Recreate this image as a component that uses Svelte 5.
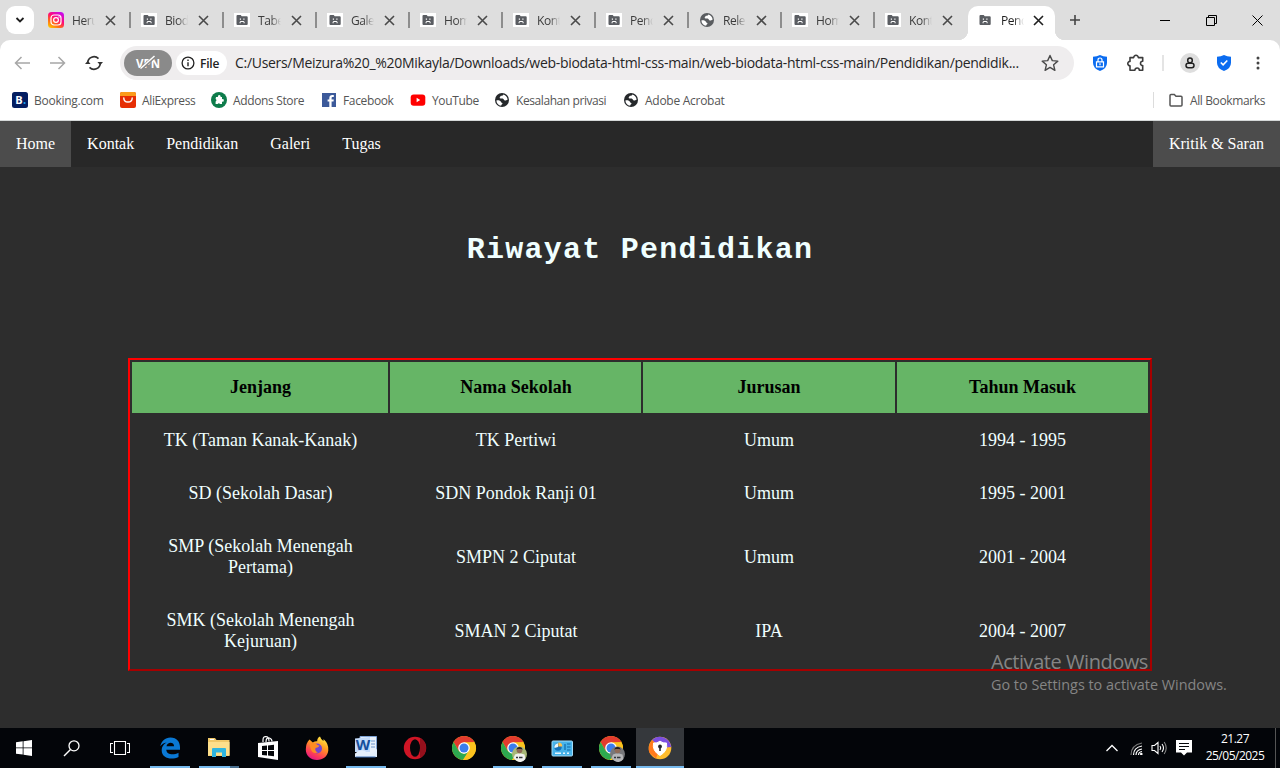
<script>
  const tabs = ['Heru', 'Biod', 'Tabe', 'Gale', 'Hom', 'Kont', 'Pend', 'Rele', 'Hom', 'Kont', 'Pend'];
  const kinds = { 0: 'insta', 7: 'globe' };
  const bookmarks = [
    { icon: 'booking', label: 'Booking.com', w: 86 },
    { icon: 'ali', label: 'AliExpress', w: 69 },
    { icon: 'addons', label: 'Addons Store', w: 88 },
    { icon: 'fb', label: 'Facebook', w: 67 },
    { icon: 'yt', label: 'YouTube', w: 62 },
    { icon: 'globe', label: 'Kesalahan privasi', w: 107 },
    { icon: 'globe', label: 'Adobe Acrobat', w: 90 }
  ];
  const links = ['Home', 'Kontak', 'Pendidikan', 'Galeri', 'Tugas'];
  const rows = [
    ['TK (Taman Kanak-Kanak)', 'TK Pertiwi', 'Umum', '1994 - 1995'],
    ['SD (Sekolah Dasar)', 'SDN Pondok Ranji 01', 'Umum', '1995 - 2001'],
    ['SMP (Sekolah Menengah Pertama)', 'SMPN 2 Ciputat', 'Umum', '2001 - 2004'],
    ['SMK (Sekolah Menengah Kejuruan)', 'SMAN 2 Ciputat', 'IPA', '2004 - 2007']
  ];
  const apps = [
    { icon: 'edge', open: true }, { icon: 'files', open: true, stacked: true }, { icon: 'store' }, { icon: 'firefox' },
    { icon: 'word', open: true }, { icon: 'opera' }, { icon: 'chrome' }, { icon: 'chromeA', open: true },
    { icon: 'panel', open: true }, { icon: 'chromeB', open: true }, { icon: 'avast', open: true, active: true }
  ];
</script>

{#snippet globe(color)}
  <svg width="16" height="16" viewBox="0 0 16 16">
    <circle cx="8" cy="8" r="7" fill={color} />
    <path d="M2.400 8.400c2.200-.3 4.300.3 4.600 1.600.2 1 1.400.6 1.500 1.600.1.8-1.600 1-1.300 2.200C4.300 13.500 2.500 11 2.400 8.400zM9.300 2.400c-.2 1.200-1 1.100-2.200 1.300-1.100.2-.5 1.500-1.600 1.900.2 1.200 2 .8 3.200 1 1.200.3 1 1.900 2.300 2 1 .1 1.500-.8 2.600-.8C13.600 5 11.800 3 9.300 2.400z" fill="#fff" />
  </svg>
{/snippet}

{#snippet cross(color, s)}
  <svg width="11" height="11" viewBox="0 0 11 11"><path d="M1 1l9 9M10 1l-9 9" stroke={color} stroke-width={s} fill="none" /></svg>
{/snippet}

{#snippet chrome()}
  <circle cx="12" cy="12" r="12" fill="#fbc116" />
  <path d="M1.600 6A12 12 0 0 1 22.400 6L12 6.600 6.800 15z" fill="#e33b2e" />
  <path d="M1.600 6A12 12 0 0 0 11 24L17.200 15 12 18 6.800 15z" fill="#2da94f" />
  <path d="M12 6.500H22.600A12 12 0 0 1 11 24L17.200 14z" fill="#fcc31e" />
  <circle cx="12" cy="12" r="5.800" fill="#fff" />
  <circle cx="12" cy="12" r="4.500" fill="#3b7ded" />
{/snippet}

{#snippet mark(kind)}
  {#if kind === 'insta'}
    <svg width="16" height="16" viewBox="0 0 16 16">
      <defs><linearGradient id="ig" x1="0.15" y1="1" x2="0.8" y2="0"><stop offset="0" stop-color="#ffc300" /><stop offset=".3" stop-color="#ff6a18" /><stop offset=".6" stop-color="#ff0b78" /><stop offset="1" stop-color="#c50cf2" /></linearGradient></defs>
      <rect width="16" height="16" rx="3.500" fill="url(#ig)" />
      <rect x="3" y="3" width="10" height="10" rx="3" fill="none" stroke="#fff" stroke-width="1.200" />
      <circle cx="8" cy="8" r="2.400" fill="none" stroke="#fff" stroke-width="1.200" /><circle cx="11" cy="5" r=".7" fill="#fff" />
    </svg>
  {:else if kind === 'globe'}
    {@render globe('#5a5d60')}
  {:else}
    <svg width="16" height="16" viewBox="0 0 16 16">
      <rect y="1" width="16" height="14" fill="#fff" />
      <path d="M2.500 4q0-1 1-1h3.200l1 1.300h5q1 0 1 1V12q0 1-1 1h-9.200q-1 0-1-1z" fill="#5a5d62" />
      <path d="M5.800 6.500h1.200v1.200h-1.200zM9.300 6.500h1.200v1.200H9.300zM5.600 11.200V10l1-1h3l1 1v1.200h-1v-.9l-.4-.3H7l-.4.3v.9z" fill="#fff" />
    </svg>
  {/if}
{/snippet}

{#snippet bicon(kind)}
  {#if kind === 'globe'}
    {@render globe('#25282b')}
  {:else}
    <svg width="16" height="16" viewBox="0 0 16 16">
      {#if kind === 'booking'}
        <rect width="16" height="16" rx="2.500" fill="#041e62" />
        <text x="3.300" y="12" class="bk">B</text><circle cx="12.500" cy="11" r="1.100" fill="#18a4f5" />
      {:else if kind === 'ali'}
        <rect width="16" height="16" rx="2" fill="#e62e04" /><path d="M0 4V2q0-2 2-2h12q2 0 2 2v2z" fill="#fb9c1b" />
        <path d="M3.800 6c0 5.400 8.400 5.400 8.400 0" fill="none" stroke="#fff" stroke-width="1.400" stroke-linecap="round" />
      {:else if kind === 'addons'}
        <circle cx="8" cy="8" r="8" fill="#0e7c4b" />
        <path d="M5 5h2a1.400 1.400 0 1 1 2.500 0H11v2.200a1.300 1.300 0 1 1 0 2.400V12H9a1.300 1.300 0 0 0-2.300 0H4.600V9.500a1.300 1.300 0 0 0 0-2.400z" fill="#fff" />
      {:else if kind === 'fb'}
        <rect x="1" y="1" width="14" height="14" fill="#3c5a9a" />
        <path d="M8.300 15V9.600H6.600V7.400h1.700V6c0-2.100 1.200-3 3-3h1.500v2h-1c-1 0-1.200.4-1.200 1.100v1.300h2.200l-.3 2.200h-1.900V15z" fill="#fff" />
      {:else}
        <rect x=".7" y="2.500" width="14.600" height="11.200" rx="3" fill="#f00" /><path d="M6.600 5.800v4.400L10.200 8z" fill="#fff" />
      {/if}
    </svg>
  {/if}
{/snippet}

{#snippet app(kind)}
  <svg width="28" height="28" viewBox="-2 -2 28 28">
    {#if kind === 'edge'}
      <path d="M2.300 10.300C3.300 5 7.100 1.500 12.400 1.500 19 1.500 22 6 22 11v2.700H8.300c.3 5.500 7.700 5.500 12.200 3v4.300C14 24.300 3.700 22.700 3.700 14.600c0-4.300 2.400-6.700 5.100-8C5.600 7 3.700 8.600 2.300 10.300zM8.500 10.200h7.600c0-4.700-7-4.600-7.600 0z" fill="#0a78d4" />
    {:else if kind === 'files'}
      <path d="M1 2h7l1.500 2h13v16H1z" fill="#f0c869" /><path d="M1 6h21.500v13.500H1z" fill="#fddf8b" />
      <path d="M5 21v-8q0-1 1-1h12q1 0 1 1v8h-4v-4.500H9V21z" fill="#2fb5df" /><path d="M3 3.500h4" stroke="#fff" />
    {:else if kind === 'store'}
      <path d="M7 6V4q0-4 3.500-3.300Q13 1 13 5.500M10 6q0-5 3.500-4Q16 3 16 5.500" fill="none" stroke="#fff" stroke-width="1.200" />
      <path d="M2 7l20-2v19L2 21z" fill="#fff" /><path d="M6 10l5-.5v4.500H6zM12 9.400l6-.6V14h-6zM6 15h5v4.500L6 19zM12 15h6v5.300l-6-.7z" fill="#05070a" />
    {:else if kind === 'firefox'}
      <defs><linearGradient id="ff" x1=".8" y1="0" x2=".3" y2="1"><stop offset="0" stop-color="#fff24a" /><stop offset=".4" stop-color="#ff9b21" /><stop offset=".75" stop-color="#ff4054" /><stop offset="1" stop-color="#e31587" /></linearGradient></defs>
      <path d="M4.500 3.500l3.300 3Q10 5 12.200 5.300 12 2 15 .5q1 3 3.300 4.500 .5-1 .2-2Q24 8 23.300 14.500C22.500 20.500 18 24 12 24 5.500 24 .8 19.500.8 13.500Q.8 7 4.500 3.500z" fill="url(#ff)" />
      <circle cx="12" cy="12.500" r="5" fill="#7546cf" /><path d="M4.500 7.500q5-2 8 1.500l2 .8q-1 2-4 2.200-1 3 2.500 4.500-6 2-7.500-4.500z" fill="#ff8c22" />
    {:else if kind === 'word'}
      <path d="M6 .5h16.500v20H6z" fill="#e9f1fb" stroke="#7fa4d6" /><path d="M17 5h4M17 8h4M17 11h4" stroke="#6f96cc" />
      <path d="M1 2.500l15-1.500v15L1 16z" fill="#c2dafa" /><text x="1.800" y="14" class="wd">W</text>
      <path d="M1 17.500q7-6 12-1 5 4 10-4v8.500H1z" fill="#e4effc" /><path d="M1.500 21h20" stroke="#3f70b7" />
    {:else if kind === 'opera'}
      <ellipse cx="12" cy="12" rx="11.200" ry="11.200" fill="#cf1525" /><path d="M17 2q6 3 6 10t-6 10z" fill="#94101c" /><ellipse cx="12" cy="12" rx="5" ry="8.800" fill="#05070a" />
    {:else if kind === 'chrome'}
      {@render chrome()}
    {:else if kind === 'chromeA' || kind === 'chromeB'}
      {@render chrome()}
      <circle cx="18.500" cy="18" r="7.500" fill={kind === 'chromeA' ? '#a8b878' : '#77787b'} />
      <path d="M12.500 22l1.500-3.500 3-1h3l3.500 1 1 4.500q-5 6.500-12-1z" fill={kind === 'chromeA' ? '#f1f1ef' : '#b5b6b8'} />
      <path d="M15 21.500h2M18 21.500h3.500" stroke="#33363b" stroke-width="1.300" />
      <circle cx="18.500" cy="14.500" r="2.800" fill="#8f6a57" /><path d="M15.500 14q0-3 3-3t3 3l-1-1h-4z" fill="#26201f" />
    {:else if kind === 'panel'}
      <rect x="2" y="5" width="20.500" height="15" rx="1" fill="#46b2ea" stroke="#a3dcf8" />
      <circle cx="8" cy="11" r="3.700" fill="#1471b8" /><path d="M8 11V7.300a3.700 3.700 0 0 0-3.500 4.700z" fill="#e8f7ff" /><path d="M8.300 10.500V6.500a4 4 0 0 1 4 4z" fill="#ffc04a" />
      <path d="M17 8h3.500M17 11h3.500M17 14h3.500M15 8v6" stroke="#0f68a8" stroke-width="1.200" fill="none" /><path d="M5 17.200h6M13 17.200h2M17 17.200h2" stroke="#e8f7ff" stroke-width="1.500" />
    {:else}
      <circle cx="12" cy="12" r="11.300" fill="#ffbd2e" /><path d="M12 12L4 4Q9-1 16 1.500 22 4 23.300 11z" fill="#7c4fe0" />
      <path d="M12 12L4 4Q-1 10 1.500 17L8 22.500z" fill="#ff7b1c" />
      <path d="M5.500 7q3.500.5 6.500-1.800Q15 7.500 18.500 7q1.500 8-6.500 12.500Q4 15 5.500 7z" fill="#fff" stroke="#fff" stroke-linejoin="round" /><circle cx="12" cy="10.500" r="1.900" fill="#25272f" /><path d="M12 11v4" stroke="#25272f" stroke-width="1.600" />
    {/if}
  </svg>
{/snippet}

<div class="screen">
  <div class="tabbar">
    <div class="menu"><svg width="10" height="6" viewBox="0 0 10 6"><path d="M1.500 1L5 4.500 8.500 1" fill="none" stroke="#1f1f1f" stroke-width="1.800" /></svg></div>
    {#each tabs as t, i}
      <div class="tab" class:active={i === 10} class:sep={i < 9}>
        {@render mark(kinds[i])}
        <span class="tt">{t}</span>
        {@render cross(i === 10 ? '#1f1f1f' : '#4a4a4a', 1.6)}
      </div>
    {/each}
    <svg class="plus" width="12" height="12" viewBox="0 0 12 12"><path d="M6 1v10M1 6h10" stroke="#444" stroke-width="1.600" /></svg>
    <div class="winbtns">
      <svg width="11" height="11" viewBox="0 0 11 11"><path d="M0 5.500h10" stroke="#000" /></svg>
      <svg width="11" height="11" viewBox="0 0 11 11"><path d="M.5 2.500h8v8h-8zM2.500 2.500v-2h8v8h-2" fill="none" stroke="#000" /></svg>
      <svg width="11" height="11" viewBox="0 0 11 11"><path d="M.5.5l10 10M10.500.5l-10 10" stroke="#000" /></svg>
    </div>
  </div>

  <div class="toolbar">
    <svg class="back" width="16" height="14" viewBox="0 0 16 14"><path d="M16 7H1.500M7.500 1l-6 6 6 6" fill="none" stroke="#a7a7a7" stroke-width="1.500" /></svg>
    <svg class="fwd" width="16" height="14" viewBox="0 0 16 14"><path d="M0 7h14.500M8.500 1l6 6-6 6" fill="none" stroke="#a7a7a7" stroke-width="1.500" /></svg>
    <svg class="reload" width="18" height="16" viewBox="0 0 18 16"><path d="M2.700 8A6.300 6.300 0 0 1 13.500 3.600M15.300 8A6.300 6.300 0 0 1 4.500 12.400" fill="none" stroke="#333" stroke-width="1.600" /><path d="M0 9h5.600L2.800 5.800zM12.400 7H18l-2.800 3.200z" fill="#333" /></svg>
    <div class="omni">
      <div class="vpn"><span>VPN</span><svg width="24" height="16" viewBox="0 0 24 16"><path d="M4.500 14.500L18.500 1.500" stroke="#8a8a8a" stroke-width="3.500" /><path d="M4.500 13.500L18.500 1" stroke="#fff" stroke-width="1.500" /></svg></div>
      <div class="file"><svg width="14" height="14" viewBox="0 0 14 14"><circle cx="7" cy="7" r="5.900" fill="none" stroke="#222" stroke-width="1.300" /><path d="M7 6.200v4M7 3.600v1.500" stroke="#222" stroke-width="1.400" /></svg><span>File</span></div>
      <span class="url">C:/Users/Meizura%20_%20Mikayla/Downloads/web-biodata-html-css-main/web-biodata-html-css-main/Pendidikan/pendidik...</span>
      <svg class="star" width="18" height="18" viewBox="0 0 18 18"><path d="M9 1.500l2.300 5.100 5.500.5-4.200 3.700 1.300 5.500L9 13.400l-4.900 2.900 1.300-5.500L1.200 7.100l5.500-.5z" fill="none" stroke="#4a4a4a" stroke-width="1.400" stroke-linejoin="round" /></svg>
    </div>
    <div class="ext">
      <svg width="14" height="16" viewBox="0 0 14 16"><path d="M7 0q3 1.800 7 1.800v6Q14 13.500 7 16 0 13.500 0 7.800v-6Q4 1.800 7 0z" fill="#0b6cf0" /><path d="M3.500 6.800h7v5h-7zM5 6.500V5q0-2 2-2t2 2v1.500" fill="none" stroke="#fff" stroke-width="1.200" /><path d="M7 8.300v2" stroke="#fff" stroke-width="1.200" /></svg>
      <svg class="puzzle" width="19" height="19" viewBox="0 0 19 19"><path d="M4 4.600h3.700a2.300 2.300 0 1 1 4.600 0h4.400v3.600a2.200 2.200 0 0 0 0 4.400v4.600h-3.400a2.200 2.200 0 0 0-4.400 0H4v-4.400a2.200 2.200 0 1 1 0-4.400z" fill="none" stroke="#3c3c3c" stroke-width="1.600" stroke-linejoin="round" /></svg>
      <i></i>
      <svg class="prof" width="20" height="20" viewBox="0 0 20 20"><circle cx="10" cy="10" r="10" fill="#dedede" /><circle cx="10" cy="7.400" r="2.300" fill="none" stroke="#222" stroke-width="1.500" /><rect x="6" y="10.200" width="8" height="4.500" rx="2.200" fill="none" stroke="#222" stroke-width="1.500" /></svg>
      <svg class="check" width="14" height="16" viewBox="0 0 14 16"><path d="M7 0q3 1.800 7 1.800v6Q14 13.500 7 16 0 13.500 0 7.800v-6Q4 1.800 7 0z" fill="#0b6cf0" /><path d="M3.800 7.500l2.300 2.300 4.200-4.300" fill="none" stroke="#fff" stroke-width="1.600" /></svg>
      <svg class="dots" width="4" height="14" viewBox="0 0 4 14"><circle cx="2" cy="2" r="1.500" fill="#444" /><circle cx="2" cy="7" r="1.500" fill="#444" /><circle cx="2" cy="12" r="1.500" fill="#444" /></svg>
    </div>
  </div>

  <div class="bookmarks">
    {#each bookmarks as b}
      <div class="bm" style:width="{b.w + 22}px">{@render bicon(b.icon)}<span>{b.label}</span></div>
    {/each}
    <div class="all"><svg width="14" height="14" viewBox="0 0 14 14"><path d="M1 2.500q0-1 1-1h3.300L7 3.300h5q1 0 1 1V12q0 1-1 1H2q-1 0-1-1z" fill="none" stroke="#555" stroke-width="1.500" /></svg><span>All Bookmarks</span></div>
  </div>

  <nav>
    {#each links as l, i}<a href="#{l}" class:on={i === 0}>{l}</a>{/each}
    <a href="#saran" class="on right">Kritik &amp; Saran</a>
  </nav>

  <main>
    <h1>Riwayat Pendidikan</h1>
    <table>
      <colgroup><col class="c1" /><col class="c2" /><col class="c3" /><col class="c4" /></colgroup>
      <thead><tr><th>Jenjang</th><th>Nama Sekolah</th><th>Jurusan</th><th>Tahun Masuk</th></tr></thead>
      <tbody>
        {#each rows as r}<tr>{#each r as c}<td>{c}</td>{/each}</tr>{/each}
      </tbody>
    </table>
    <div class="notice"><div class="n1">Activate Windows</div><div class="n2">Go to Settings to activate Windows.</div></div>
  </main>

  <footer>
    <div class="sys"><svg width="16" height="16" viewBox="0 0 16 16"><path d="M0 2.300L6.700 1.300V7.500H0zM7.500 1.200L16 0v7.500H7.500zM0 8.300h6.700v6.300L0 13.700zM7.500 8.300H16V16l-8.500-1.200z" fill="#fff" /></svg></div>
    <div class="sys"><svg width="18" height="18" viewBox="0 0 18 18"><circle cx="11" cy="6.800" r="5" fill="none" stroke="#fff" stroke-width="1.300" /><path d="M7.500 10.500L1 17" stroke="#fff" stroke-width="1.400" /></svg></div>
    <div class="sys last"><svg width="20" height="16" viewBox="0 0 20 16"><path d="M4.500 1.500h11v13h-11zM3 3.500H.5v9H3M17 3.500h2.500v9H17" fill="none" stroke="#fff" stroke-width="1.100" /></svg></div>
    {#each apps as a}
      <div class="app" class:open={a.open} class:stacked={a.stacked} class:current={a.active}>{@render app(a.icon)}</div>
    {/each}
    <div class="tray">
      <svg width="12" height="8" viewBox="0 0 12 8"><path d="M.5 7L6 1.500 11.500 7" fill="none" stroke="#fff" stroke-width="1.300" /></svg>
      <svg class="wifi" width="13" height="13" viewBox="0 0 13 13"><path d="M1 13Q1 3 12 1" fill="none" stroke="#777" stroke-width="1.200" /><path d="M3.500 13Q3.500 5.500 12 4M6 13Q6 8 12 7M8.500 13q0-3 3.500-3.500" fill="none" stroke="#fff" stroke-width="1.200" /><circle cx="11.300" cy="12" r="1.300" fill="#fff" /></svg>
      <svg class="vol" width="17" height="14" viewBox="0 0 17 14"><path d="M1 4.500h2.500L7 1.500v11L3.500 9.500H1z" fill="none" stroke="#fff" stroke-width="1.100" /><path d="M9 5q1.500 2 0 4M11 3q3 4 0 8" fill="none" stroke="#fff" stroke-width="1.100" /><path d="M13.200 1q4 6 0 12" fill="none" stroke="#888" stroke-width="1.100" /></svg>
      <svg class="note" width="16" height="16" viewBox="0 0 16 16"><path d="M0 0h16v12.500h-5L8 15.500l-3-3H0z" fill="#fff" /><path d="M3 3.500h10M3 6.500h10M3 9.500h6" stroke="#05070a" /></svg>
      <div class="clock"><div class="time">21.27</div><div class="date">25/05/2025</div></div>
    </div>
  </footer>
</div>

<style>
  :global(body) { margin: 0; overflow: hidden; }
  .screen { width: 1280px; height: 768px; display: flex; flex-direction: column; background: #dedede; font-family: "Open Sans", "Noto Sans", sans-serif; overflow: hidden; }
  .screen * { box-sizing: border-box; }
  svg { display: block; flex: none; }
  span { white-space: nowrap; }
  .tabbar { height: 40px; display: flex; align-items: center; flex: none; }
  .menu { width: 28px; height: 28px; border-radius: 9px; background: #fff; margin: 0 4px 0 6px; display: flex; align-items: center; justify-content: center; }
  .tab { width: 93px; height: 40px; flex: none; display: flex; align-items: center; padding-left: 10px; position: relative; }
  .tab.sep::after { content: ""; position: absolute; right: 0; top: 12px; width: 2px; height: 16px; background: #8d8d8d; }
  .tt { width: 23px; overflow: hidden; margin: 2px 10px 0 8px; font-size: 12px; line-height: 18px; letter-spacing: -0.45px; color: #3c3c3c; -webkit-mask-image: linear-gradient(90deg, #000 55%, transparent); mask-image: linear-gradient(90deg, #000 55%, transparent); }
  .active { width: 87px; height: 34px; align-self: flex-end; background: #fff; border-radius: 10px 10px 0 0; padding-left: 9px; }
  .active > :global(*) { transform: translateY(-3px); }
  .active .tt { color: #1f1f1f; margin-right: 9px; }
  .active::before, .active::after { content: ""; position: absolute; bottom: 0; width: 10px; height: 10px; }
  .active::before { left: -10px; background: radial-gradient(circle at 0 0, transparent 10px, #fff 10.5px); }
  .active::after { right: -10px; background: radial-gradient(circle at 100% 0, transparent 10px, #fff 10.5px); }
  .plus { margin-left: 14px; }
  .winbtns { margin-left: auto; display: flex; gap: 35px; padding-right: 17px; }
  .toolbar { height: 46px; flex: none; display: flex; align-items: center; background: #fff; border-radius: 10px 10px 0 0; }
  .back { margin-left: 14px; }
  .fwd { margin-left: 20px; }
  .reload { margin-left: 19px; }
  .omni { margin-left: 17px; width: 954px; height: 34px; border-radius: 17px; background: #efedee; display: flex; align-items: center; padding-left: 4px; }
  .vpn { width: 48px; height: 26px; border-radius: 13px; background: #8a8a8a; color: #fff; font-size: 11.500px; font-weight: 700; display: grid; place-items: center; }
  .vpn > :global(*) { grid-area: 1 / 1; }
  .file { width: 51px; height: 24px; border-radius: 12px; background: #fff; margin-left: 4px; display: flex; align-items: center; gap: 5px; padding-left: 5px; font-size: 12px; font-weight: 600; letter-spacing: -0.2px; color: #222; }
  .url { width: 786px; margin-left: 8px; margin-top: -1px; font-size: 14px; letter-spacing: -0.3px; color: #262626; }
  .star { margin-left: 20px; }
  .ext { display: flex; align-items: center; margin-left: 19px; }
  .puzzle { margin-left: 19px; margin-right: 1px; margin-top: -1px; }
  .ext i { width: 2px; height: 16px; background: #e4e4e4; margin: 0 16px 0 16px; }
  .check { margin-left: 17px; }
  .dots { margin-left: 25px; }
  .bookmarks { height: 35px; flex: none; background: #fff; border-bottom: 1px solid #d5d8d8; display: flex; align-items: center; padding: 0 14px 6px 12px; font-size: 12px; letter-spacing: -0.36px; color: #555; }
  .bm { display: flex; align-items: center; gap: 6px; flex: none; }
  .bm:first-child, .bm:nth-child(7) { letter-spacing: -0.27px; }
  .bm:nth-child(6) { letter-spacing: -0.42px; }
  .all { margin-left: auto; width: 113px; display: flex; align-items: center; gap: 7px; border-left: 1px solid #dcdcdc; padding-left: 15px; height: 16px; letter-spacing: -0.38px; }
  nav { height: 46px; flex: none; display: flex; background: #282828; font: 16px "Liberation Serif", serif; }
  nav a { color: #fff; text-decoration: none; padding: 14px 16px; line-height: 18px; }
  .on { background: #4c4c4c; }
  .right { margin-left: auto; }
  main { flex: 1; background: #2d2d2d; position: relative; overflow: hidden; }
  h1 { margin: 65px 0 0; text-align: center; font: 700 30px/36px "Liberation Mono", monospace; letter-spacing: 1.25px; color: #f0ffff; }
  table { width: 1024px; margin: 90px 0 0 128px; border: 2px solid; border-color: #f00 #a60000 #a60000 #f00; border-spacing: 2px; table-layout: fixed; font: 18px/21px "Liberation Serif", serif; color: #f0ffff; text-align: center; }
  .c1 { width: 256px; }
  .c2, .c4 { width: 251px; }
  .c3 { width: 252px; }
  th, td { padding: 15px 14px 15px 15px; }
  th:nth-child(n+3), td:nth-child(n+3) { padding: 15px; }
  th { background: #66b566; color: #000; }
  .notice { position: absolute; left: 991px; top: 483px; color: #858585; white-space: nowrap; }
  .n1 { font-size: 20px; line-height: 24px; letter-spacing: -0.45px; }
  .n2 { font-size: 14.400px; line-height: 21px; }
  footer { height: 40px; flex: none; background: #030509; display: flex; }
  .sys { width: 48px; display: flex; align-items: center; justify-content: center; }
  .last { margin-right: 2px; }
  .app { width: 49px; display: flex; align-items: center; justify-content: center; padding-right: 2px; position: relative; }
  .open::after { content: ""; position: absolute; left: 4px; width: 40px; bottom: 0; height: 2px; background: #76b9ed; }
  .stacked::after { background: linear-gradient(90deg, #76b9ed 31px, #4a7090 31px); }
  .current { background: #35383c; width: 48px; padding: 0; }
  .current::after { left: 0; width: 48px; }
  .tray { margin-left: auto; display: flex; align-items: center; color: #fff; }
  .wifi { margin-left: 12px; }
  .vol { margin-left: 8px; }
  .note { margin-left: 8px; }
  .clock { width: 84px; height: 40px; border-right: 1px solid #555; margin: 0 4px 0 0; text-align: center; font-size: 12px; line-height: 17px; letter-spacing: -0.5px; padding: 2px 0 0 3px; }
  .bk { font: 700 11px "Open Sans", sans-serif; letter-spacing: 0; fill: #fff; }
  .wd { font: 700 15px "Open Sans", sans-serif; fill: #174f9c; }
</style>
